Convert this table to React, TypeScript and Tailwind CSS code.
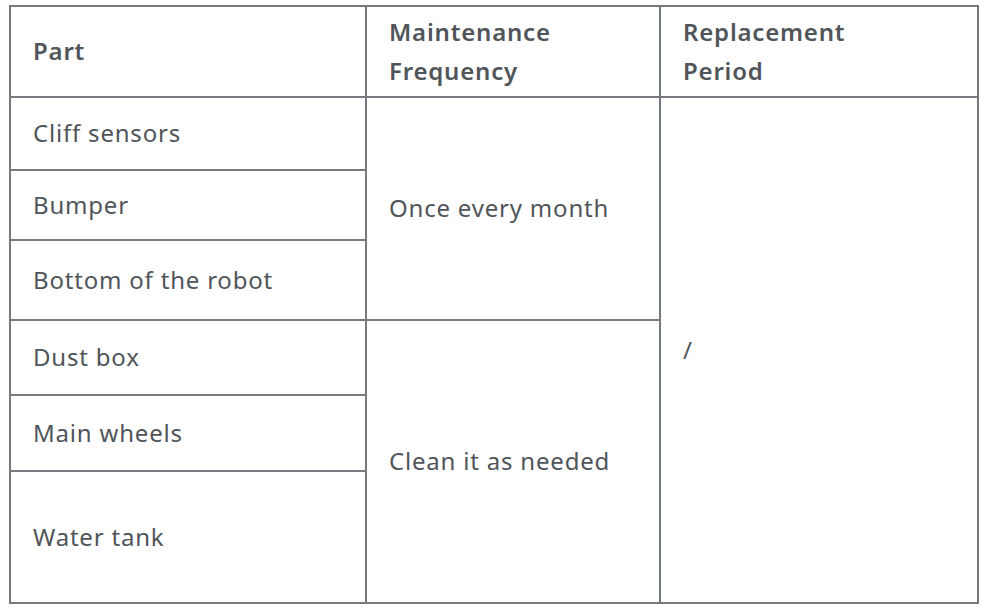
import React from "react";

const cell = "border-2 border-[#76797d] align-middle px-[22px] pb-[2px] text-left";

export default function App() {
  return (
    <div className="w-[988px] h-[609px] bg-white pt-[5px] pl-[9px]" style={{ fontFamily: "'Noto Sans', sans-serif" }}>
      <table className="border-collapse text-[#50555a] text-[24px] leading-[39px] tracking-[0.8px] table-fixed w-[968px]">
        <colgroup>
          <col className="w-[356px]" />
          <col className="w-[294px]" />
          <col className="w-[318px]" />
        </colgroup>
        <tbody>
          <tr className="h-[91px]">
            <th className={`${cell} font-semibold`}>Part</th>
            <th className={`${cell} font-semibold`}>Maintenance<br />Frequency</th>
            <th className={`${cell} font-semibold`}>Replacement<br />Period</th>
          </tr>
          <tr className="h-[73px]">
            <td className={cell}>Cliff sensors</td>
            <td className={cell} rowSpan={3}>Once every month</td>
            <td className={cell} rowSpan={6}>/</td>
          </tr>
          <tr className="h-[70px]">
            <td className={cell}>Bumper</td>
          </tr>
          <tr className="h-[80px]">
            <td className={cell}>Bottom of the robot</td>
          </tr>
          <tr className="h-[75px]">
            <td className={cell}>Dust box</td>
            <td className={cell} rowSpan={3}>Clean it as needed</td>
          </tr>
          <tr className="h-[76px]">
            <td className={cell}>Main wheels</td>
          </tr>
          <tr className="h-[132px]">
            <td className={cell}>Water tank</td>
          </tr>
        </tbody>
      </table>
    </div>
  );
}
